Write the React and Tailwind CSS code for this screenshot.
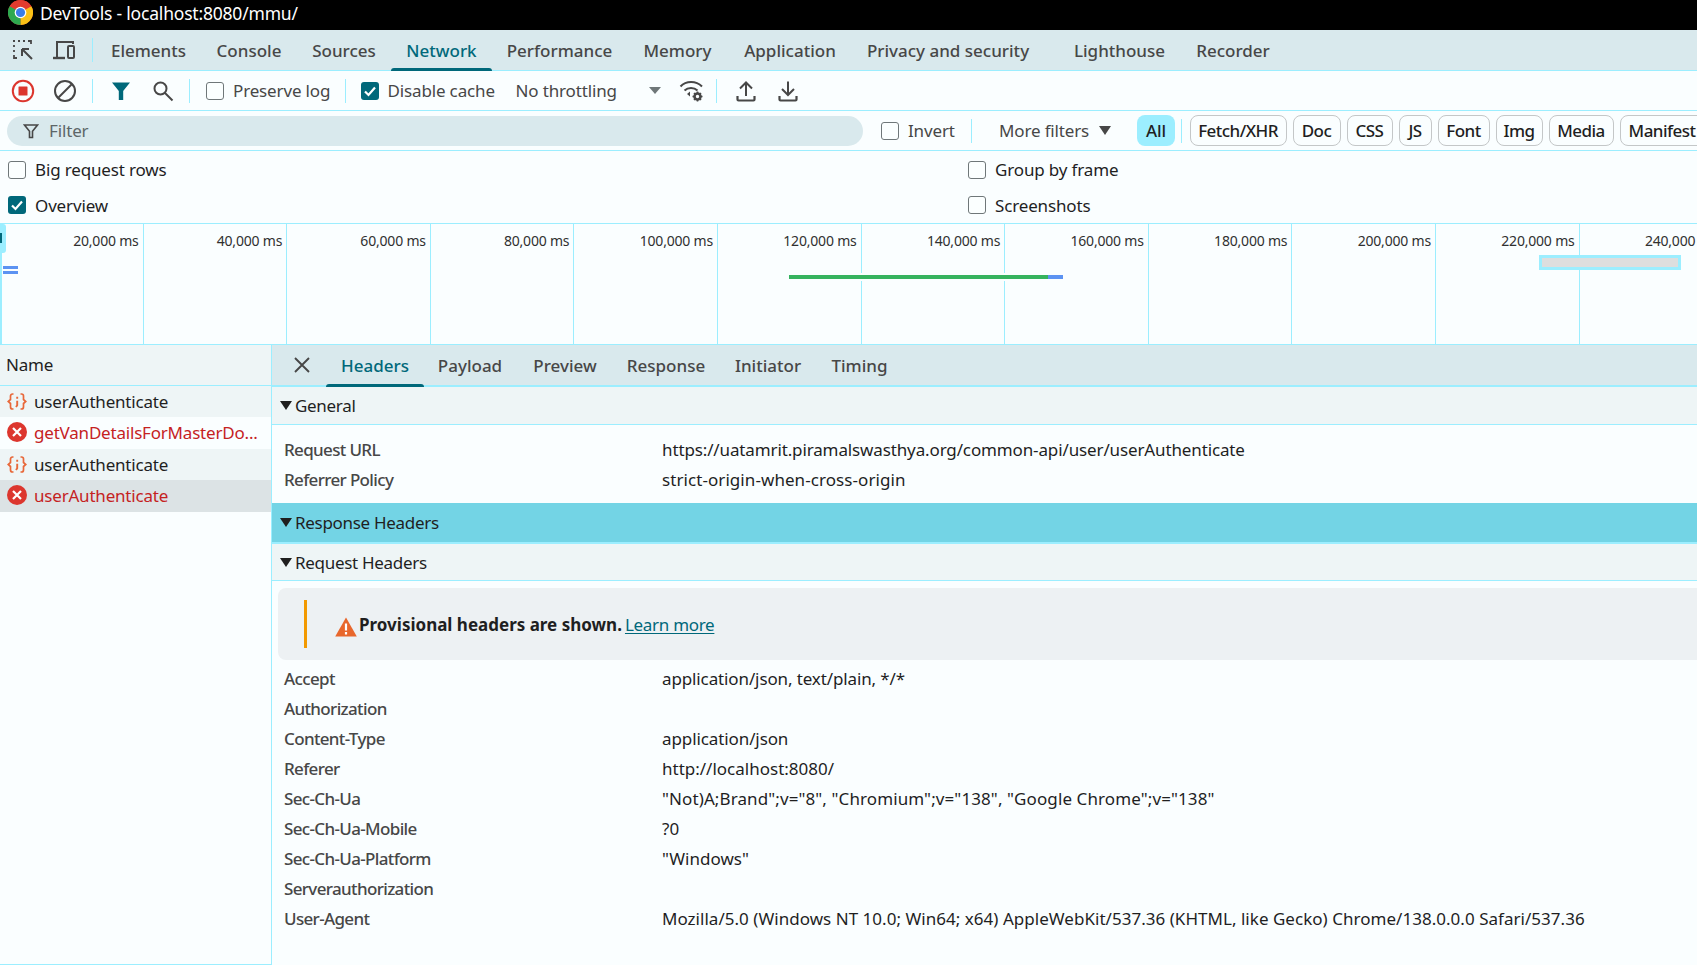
import React from "react";

const Chrome = () => (
  <svg width="25" height="25" viewBox="0 0 24 24" className="shrink-0">
    <circle cx="12" cy="12" r="12" fill="#e33b2e" />
    <path d="M12 12 L22.4 6 A12 12 0 0 1 12 24 Z" fill="#fbc116" />
    <path d="M12 12 L12 24 A12 12 0 0 1 1.6 6 Z" fill="#2da94f" />
    <path d="M1.6 6 A12 12 0 0 1 12 0 A12 12 0 0 1 22.4 6 L12 6 Z" fill="#e33b2e" />
    <circle cx="12" cy="12" r="5.6" fill="#fff" />
    <circle cx="12" cy="12" r="4.4" fill="#3b7de8" />
  </svg>
);
const Inspect = () => (
  <svg width="24" height="24" viewBox="0 0 24 24" fill="none" stroke="#474747" strokeWidth="2">
    <path d="M2 3h2M7 3h2M12 3h2M17 3h3v3M3 7v2M3 12v2M3 17v3h3" strokeWidth="1.8" />
    <path d="M21 21 L11 11 M11 11h7 M11 11v7" />
  </svg>
);
const Device = () => (
  <svg width="26" height="24" viewBox="0 0 26 24" fill="none" stroke="#474747" strokeWidth="2">
    <path d="M6 19V4h16v2" />
    <path d="M2 20h12" strokeWidth="2.4" />
    <rect x="17" y="8" width="6" height="12" rx="1" />
  </svg>
);
const Record = () => (
  <svg width="24" height="24" viewBox="0 0 24 24">
    <circle cx="12" cy="12" r="10.2" fill="none" stroke="#dc362e" strokeWidth="2" />
    <rect x="7.5" y="7.5" width="9" height="9" rx="0.5" fill="#dc362e" />
  </svg>
);
const Clear = () => (
  <svg width="24" height="24" viewBox="0 0 24 24" fill="none" stroke="#474747" strokeWidth="2">
    <circle cx="12" cy="12" r="10" />
    <path d="M19 5 L5 19" />
  </svg>
);
const Funnel = ({ solid }) =>
  solid ? (
    <svg width="20" height="20" viewBox="0 0 20 20">
      <path d="M1 1.5h18l-6.8 8.4V19h-4.4V9.9Z" fill="#00687a" />
    </svg>
  ) : (
    <svg width="16" height="16" viewBox="0 0 16 16" fill="none" stroke="#474747" strokeWidth="1.6">
      <path d="M1.5 2h13l-5 6.2V14.500h-3V8.200Z" />
    </svg>
  );
const Search = () => (
  <svg width="22" height="22" viewBox="0 0 22 22" fill="none" stroke="#474747" strokeWidth="2">
    <circle cx="8.500" cy="8.500" r="6" />
    <path d="M13 13 L20.500 20.500" />
  </svg>
);
const WifiGear = () => (
  <svg width="26" height="24" viewBox="0 0 26 24" fill="none" stroke="#474747" strokeWidth="2">
    <path d="M1.500 7.500C7 1.500 17 1.500 23 7.500" />
    <path d="M5.500 11.500C9 8 15 8 18.500 11.500" />
    <path d="M8 15l3-2.500v5Z" fill="#474747" stroke="none" />
    <circle cx="18.500" cy="17.500" r="3" strokeWidth="2.600" />
    <path d="M18.500 12.500v2M18.500 20.500v2M13.500 17.500h2M21.500 17.500h2M15 14l1.400 1.400M20.600 19.600l1.400 1.400M15 21l1.400-1.400M20.600 15.400L22 14" strokeWidth="1.600" />
  </svg>
);
const Upload = () => (
  <svg width="20" height="22" viewBox="0 0 20 22" fill="none" stroke="#474747" strokeWidth="2">
    <path d="M10 16V2.500M4 8.500l6-6 6 6" />
    <path d="M1.500 16v3.500a1 1 0 0 0 1 1h15a1 1 0 0 0 1-1V16" strokeWidth="2.200" />
  </svg>
);
const Download = () => (
  <svg width="20" height="22" viewBox="0 0 20 22" fill="none" stroke="#474747" strokeWidth="2">
    <path d="M10 1.500V15M4 9l6 6 6-6" />
    <path d="M1.500 16v3.500a1 1 0 0 0 1 1h15a1 1 0 0 0 1-1V16" strokeWidth="2.200" />
  </svg>
);
const Close = () => (
  <svg width="16" height="16" viewBox="0 0 16 16" fill="none" stroke="#474747" strokeWidth="1.900">
    <path d="M1 1 L15 15 M15 1 L1 15" />
  </svg>
);
const Braces = () => (
  <svg width="20" height="17" viewBox="0 0 20 17" fill="none" stroke="#e8683a" strokeWidth="1.700">
    <path d="M6.500 1H5.500a2 2 0 0 0-2 2V6.500L1.200 8.500l2.300 2V14a2 2 0 0 0 2 2h1" />
    <path d="M13.500 1h1a2 2 0 0 1 2 2V6.500l2.300 2-2.300 2V14a2 2 0 0 1-2 2h-1" />
    <path d="M10.200 3.800v2M10.200 7.800v4.500L9 14" strokeWidth="1.900" />
  </svg>
);
const ErrorIcon = () => (
  <svg width="20" height="20" viewBox="0 0 20 20">
    <circle cx="10" cy="10" r="10" fill="#dc362e" />
    <path d="M6 6 L14 14 M14 6 L6 14" stroke="#fff" strokeWidth="2.200" fill="none" />
  </svg>
);
const Warning = () => (
  <svg width="22" height="20" viewBox="0 0 22 20">
    <path d="M11 0.500L21.800 19.500H0.200Z" fill="#e8672c" />
    <path d="M11 6.500v7M11 15v2.500" stroke="#fff" strokeWidth="2.200" fill="none" />
  </svg>
);
const Arrow = () => <span className="inline-block w-0 h-0 border-l-[6px] border-r-[6px] border-t-[9px] border-l-transparent border-r-transparent border-t-[#1f1f1f]" />;

const Check = ({ checked }) =>
  checked ? (
    <span className="w-[18px] h-[18px] rounded-[3px] bg-[#00687a] flex items-center justify-center shrink-0">
      <svg width="14" height="14" viewBox="0 0 14 14" fill="none" stroke="#fff" strokeWidth="2.200">
        <path d="M2 7.500l3.500 3.500L12 3.500" />
      </svg>
    </span>
  ) : (
    <span className="w-[18px] h-[18px] rounded-[3px] border-[1.500px] border-[#6f7779] bg-[#fbffff] shrink-0" />
  );

const topTabs = [
  ["Elements", "w-[105px]"],
  ["Console", "w-[96px]"],
  ["Sources", "w-[94px]"],
  ["Network", "w-[101px]"],
  ["Performance", "w-[135px]"],
  ["Memory", "w-[101px]"],
  ["Application", "w-[124px]"],
  ["Privacy and security", "w-[207px] pr-[15px]"],
  ["Lighthouse", "w-[121px]"],
  ["Recorder", "w-[106px]"],
];
const chips = [
  ["Fetch/XHR", "w-[97px]"],
  ["Doc", "w-[48px]"],
  ["CSS", "w-[46px]"],
  ["JS", "w-[33px]"],
  ["Font", "w-[52px]"],
  ["Img", "w-[47px]"],
  ["Media", "w-[65px]"],
  ["Manifest", "w-[85px]"],
];
const marks = ["20,000", "40,000", "60,000", "80,000", "100,000", "120,000", "140,000", "160,000", "180,000", "200,000", "220,000", "240,000"];
const requests = [
  ["userAuthenticate", false, "bg-[#eef5f6]", "h-[31px]"],
  ["getVanDetailsForMasterDo...", true, "bg-[#fafeff]", "h-[32px] pb-[2px]"],
  ["userAuthenticate", false, "bg-[#eef5f6]", "h-[31px]"],
  ["userAuthenticate", true, "bg-[#dce3e5]", "h-[32px] pb-[2px]"],
];
const detailTabs = [
  ["Headers", "w-[98px]", true],
  ["Payload", "w-[92px]", false],
  ["Preview", "w-[98px]", false],
  ["Response", "w-[104px]", false],
  ["Initiator", "w-[100px]", false],
  ["Timing", "w-[83px]", false],
];
const general = [
  ["Request URL", "https://uatamrit.piramalswasthya.org/common-api/user/userAuthenticate", "tracking-[-0.13px]"],
  ["Referrer Policy", "strict-origin-when-cross-origin", "tracking-[0.07px]"],
];
const reqHeaders = [
  ["Accept", "application/json, text/plain, */*", "tracking-[-0.12px]"],
  ["Authorization", "", ""],
  ["Content-Type", "application/json", "tracking-[-0.1px]"],
  ["Referer", "http://localhost:8080/", "tracking-[0px]"],
  ["Sec-Ch-Ua", '"Not)A;Brand";v="8", "Chromium";v="138", "Google Chrome";v="138"', "tracking-[0.1px]"],
  ["Sec-Ch-Ua-Mobile", "?0", "tracking-[0px]"],
  ["Sec-Ch-Ua-Platform", '"Windows"', "tracking-[0px]"],
  ["Serverauthorization", "", ""],
  ["User-Agent", "Mozilla/5.0 (Windows NT 10.0; Win64; x64) AppleWebKit/537.36 (KHTML, like Gecko) Chrome/138.0.0.0 Safari/537.36", "tracking-[0.03px]"],
];

const Divider = ({ className }) => <span className={"w-px bg-[#9ceeff] shrink-0 " + className} />;

const KV = ({ k, v, t }) => (
  <div className="flex items-center h-[30px] pl-[12px] whitespace-nowrap">
    <span className="w-[378px] shrink-0 font-medium text-[#474747] tracking-[-0.65px]">{k}</span>
    <span className={"text-[#1f1f1f] " + t}>{v}</span>
  </div>
);

const Section = ({ title, className }) => (
  <div className={"flex items-center pl-[8px] gap-[3px] text-[#1f1f1f] tracking-[-0.3px] " + className}>
    <Arrow />
    <span>{title}</span>
  </div>
);

export default function App() {
  return (
    <div className="w-[1697px] h-[965px] overflow-hidden bg-[#fafeff] flex flex-col text-[17px] leading-none text-[#1f1f1f] font-['Noto_Sans',sans-serif] tracking-[-0.15px]">
      <div className="h-[30px] bg-black flex items-start pl-[8px] gap-[7px] shrink-0 overflow-hidden">
        <Chrome />
        <span className="text-white text-[17.500px] mt-[5px] tracking-[-0.2px]">DevTools - localhost:8080/mmu/</span>
      </div>

      <div className="h-[41px] bg-[#d9e9ed] border-b border-[#9ceeff] flex items-stretch shrink-0">
        <div className="flex items-center gap-[16px] pl-[11px] w-[92px] shrink-0">
          <Inspect />
          <Device />
        </div>
        <Divider className="my-[8px] w-[1.500px]" />
        <div className="flex items-stretch pl-[3px] tracking-[0px]">
          {topTabs.map(([t, w], i) => (
            <div key={t} className={"relative flex items-center justify-center font-medium pt-[1px] " + w + (i === 3 ? " text-[#00687a]" : " text-[#474747]")}>
              <span>{t}</span>
              {i === 3 && <span className="absolute left-0 right-0 bottom-[-1px] h-[3px] rounded-t-[3px] bg-[#00687a]" />}
            </div>
          ))}
        </div>
      </div>

      <div className="h-[40px] border-b border-[#9ceeff] flex items-center shrink-0 text-[#474747]">
        <div className="flex items-center gap-[18px] pl-[11px] w-[92px]">
          <Record />
          <Clear />
        </div>
        <Divider className="h-[24px] w-[1.500px]" />
        <div className="flex items-center gap-[21px] pl-[18px] w-[96px]">
          <Funnel solid />
          <Search />
        </div>
        <Divider className="h-[24px]" />
        <div className="flex items-center gap-[9px] pl-[16px] w-[154.500px]">
          <Check />
          <span>Preserve log</span>
        </div>
        <Divider className="h-[24px] w-[1.500px]" />
        <div className="flex items-center gap-[9px] pl-[15px] w-[170px]">
          <Check checked />
          <span>Disable cache</span>
        </div>
        <div className="flex items-center w-[144px]">
          <span>No throttling</span>
          <span className="ml-auto mr-[-1px] w-0 h-0 border-l-[6px] border-r-[6px] border-t-[7px] border-l-transparent border-r-transparent border-t-[#6f7779]" />
        </div>
        <div className="ml-[19px] flex items-center w-[37px]"><WifiGear /></div>
        <Divider className="h-[24px]" />
        <div className="flex items-center gap-[22px] pl-[19px]">
          <Upload />
          <Download />
        </div>
      </div>

      <div className="h-[40px] border-b border-[#9ceeff] flex items-center shrink-0 pl-[7px] whitespace-nowrap overflow-hidden">
        <div className="w-[856px] h-[30px] rounded-full bg-[#d9e9ed] flex items-center gap-[10px] pl-[16px] text-[#5d6668] shrink-0">
          <Funnel />
          <span>Filter</span>
        </div>
        <div className="flex items-center gap-[9px] pl-[18px] w-[108px] text-[#474747] shrink-0">
          <Check />
          <span>Invert</span>
        </div>
        <Divider className="h-[24px]" />
        <div className="flex items-center w-[165px] pl-[27px] text-[#474747] shrink-0">
          <span>More filters</span>
          <span className="ml-[10px] w-0 h-0 border-l-[6px] border-r-[6px] border-t-[9px] border-l-transparent border-r-transparent border-t-[#474747]" />
        </div>
        <span className="w-[38px] h-[31px] rounded-[8px] bg-[#9ceeff] flex items-center justify-center font-medium shrink-0">All</span>
        <Divider className="h-[24px] ml-[6px] mr-[7.500px]" />
        <div className="flex items-center gap-[6px] tracking-[-0.55px]">
          {chips.map(([c, w]) => (
            <span key={c} className={"h-[31px] rounded-[8px] border border-[#c4c7c8] flex items-center justify-center font-medium shrink-0 " + w}>{c}</span>
          ))}
        </div>
      </div>

      <div className="h-[73px] border-b border-[#9ceeff] shrink-0 grid grid-cols-[960px_1fr] grid-rows-2 pt-[1px] pb-[1px]">
        <label className="flex items-center gap-[9px] pl-[8px]"><Check /><span>Big request rows</span></label>
        <label className="flex items-center gap-[9px] pl-[8px]"><Check /><span>Group by frame</span></label>
        <label className="flex items-center gap-[9px] pl-[8px]"><Check checked /><span className="mt-[1px]">Overview</span></label>
        <label className="flex items-center gap-[9px] pl-[8px]"><Check /><span className="mt-[1px]">Screenshots</span></label>
      </div>

      <div className="relative h-[121px] border-b border-[#9ceeff] shrink-0 overflow-hidden flex">
        {marks.map((m) => (
          <div key={m} className="w-[143.600px] shrink-0 border-r-[1.500px] border-[#9ceeff] text-right pr-[4px] pt-[10px] text-[14px] whitespace-nowrap text-[#303030] tracking-[-0.2px]">
            {m} ms
          </div>
        ))}
        <span className="absolute left-0 top-0 bottom-0 w-[2px] bg-[#9ceeff]" />
        <span className="absolute left-0 top-0 w-[6px] h-[29px] rounded-r-[3px] bg-[#9ceeff]">
          <span className="absolute left-0 top-[9px] w-[2px] h-[10px] bg-[#00687a]" />
        </span>
        <span className="absolute left-[3px] top-[42px] w-[15px] h-[3px] bg-[#5c93f2]" />
        <span className="absolute left-[3px] top-[47px] w-[15px] h-[3px] bg-[#5c93f2]" />
        <span className="absolute left-[788px] top-[49px] w-[277px] h-[8px] bg-[#fafeff]" />
        <span className="absolute left-[789px] top-[51px] w-[259px] h-[4px] bg-[#35b35e]" />
        <span className="absolute left-[1048px] top-[51px] w-[15px] h-[4px] bg-[#5c93f2]" />
        <span className="absolute left-[1539px] top-[31px] w-[142px] h-[15px] bg-[#dedede] border-[3px] border-[#9ceeff]" />
      </div>

      <div className="flex-1 flex min-h-0">
        <div className="w-[272px] border-r border-b border-[#9ceeff] shrink-0 flex flex-col tracking-[-0.2px]">
          <div className="h-[41px] bg-[#eef5f6] border-b border-[#9ceeff] flex items-center pl-[6px] pb-[2px] text-[#1f1f1f]">Name</div>
          {requests.map(([n, err, bg, h], i) => (
            <div key={i} className={"flex items-center gap-[7px] pl-[7px] whitespace-nowrap " + bg + " " + h + (err ? " text-[#c5221f]" : " text-[#1f1f1f]")}>
              {err ? <ErrorIcon /> : <Braces />}
              <span>{n}</span>
            </div>
          ))}
        </div>

        <div className="flex-1 flex flex-col min-w-0">
          <div className="h-[42px] bg-[#d9e9ed] border-b-[2px] border-[#9ceeff] flex items-stretch shrink-0 text-[#474747] font-medium tracking-[0px]">
            <div className="w-[54px] flex items-center pl-[22px] shrink-0"><Close /></div>
            {detailTabs.map(([t, w, active]) => (
              <div key={t} className={"relative flex items-center justify-center " + w + (active ? " text-[#00687a]" : "")}>
                <span>{t}</span>
                {active && <span className="absolute left-0 right-0 bottom-[-2px] h-[3px] rounded-t-[3px] bg-[#00687a]" />}
              </div>
            ))}
          </div>
          <Section title="General" className="h-[38px] bg-[#eef5f6] border-b border-[#9ceeff] shrink-0" />
          <div className="h-[78px] pt-[9px] shrink-0">
            {general.map(([k, v, t]) => <KV key={k} k={k} v={v} t={t} />)}
          </div>
          <Section title="Response Headers" className="h-[41px] bg-[#73d4e5] border-b-[2px] border-[#9ceeff] shrink-0" />
          <Section title="Request Headers" className="h-[37px] bg-[#eef5f6] border-b border-[#9ceeff] shrink-0" />
          <div className="mt-[7px] ml-[6px] h-[72px] rounded-l-[8px] bg-[#edf1f3] flex items-center pl-[26px] shrink-0 whitespace-nowrap">
            <span className="w-[3px] h-[48px] bg-[#f29900] mr-[28px]" />
            <span className="mt-[6px] mr-[2px]"><Warning /></span>
            <span className="font-bold text-[#1f1f1f] mr-[3px] tracking-[0px]">Provisional headers are shown.</span>
            <span className="text-[#00687a] underline underline-offset-2 tracking-[-0.3px]">Learn more</span>
          </div>
          <div className="pt-[3px]">
            {reqHeaders.map(([k, v, t]) => <KV key={k} k={k} v={v} t={t} />)}
          </div>
        </div>
      </div>
    </div>
  );
}
